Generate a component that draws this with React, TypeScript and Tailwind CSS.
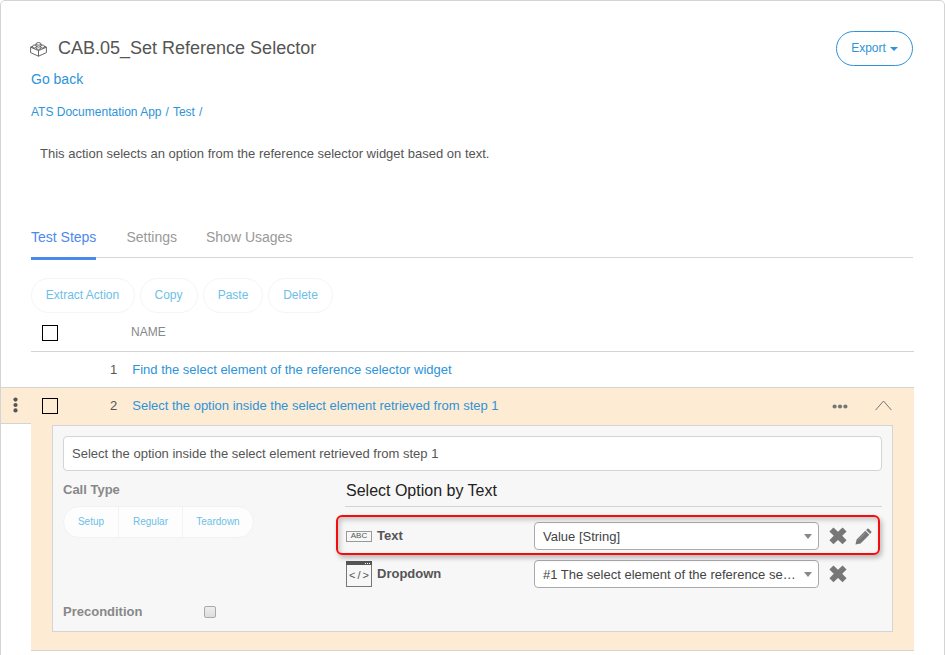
import React from "react";

function Times() {
  return (
    <svg width="18" height="18" viewBox="0 0 17 17" className="shrink-0" fill="#777">
      <path d="M4.2 0.4 8.5 4.5 12.8 0.4 16.6 4.2 12.5 8.3 16.6 12.6 12.8 16.4 8.5 12.3 4.2 16.4 0.4 12.6 4.5 8.3 0.4 4.2Z" />
    </svg>
  );
}

function Pencil() {
  return (
    <svg width="17" height="17" viewBox="0 0 17 17" className="shrink-0" fill="#777">
      <path d="M0.5 16.5 1.6 11.4 10.3 2.7 14.3 6.7 5.6 15.4ZM11.1 1.9 12.4 0.7Q13 0.2 13.6 0.7L16.3 3.4Q16.8 4 16.3 4.6L15.1 5.9Z" />
      <path d="M3.6 11.6 10.6 4.6" stroke="#aaa" strokeWidth="0.7" />
    </svg>
  );
}

function Brick() {
  return (
    <svg width="17" height="15" viewBox="0 0 17 15" fill="none" stroke="#555" strokeWidth="0.9" strokeLinejoin="round">
      <path d="M2.6 4 0.6 5.2 8.5 8.6 16.4 5.2 14.4 4M0.6 5.2V10.6L8.5 14.2 16.4 10.6V5.2M8.5 8.6V14.2" />
      <path d="M6 2V4.4Q8.5 6 11 4.4V2" />
      <ellipse cx="8.5" cy="1.9" rx="2.5" ry="1.3" />
      <path d="M6 3.2Q3.4 2.4 2.6 4V5.4Q4.4 6.8 6.4 5.4M11 3.2Q13.6 2.4 14.4 4V5.4Q12.6 6.8 10.6 5.4M6.4 5.6V6.8Q8.5 8 10.6 6.8V5.6" />
    </svg>
  );
}

function SelectBox({ children }: { children: string }) {
  return (
    <div className="flex h-7 w-[285px] shrink-0 items-center justify-between rounded border border-[#aaa] bg-white pr-[6px] pl-[8px] text-[13px] text-[#444]">
      <span className="mt-px whitespace-nowrap">{children}</span>
      <svg width="8" height="5" viewBox="0 0 8 5"><path d="M0 0H8L4 5Z" fill="#888" /></svg>
    </div>
  );
}

const pill = "flex h-[35px] items-center justify-center whitespace-nowrap rounded-full border border-[#f5f5f5] pb-[2px] text-[12px] text-[#6cbfe8]";

export default function App() {
  return (
    <div className="h-[655px] w-[945px] overflow-hidden bg-white font-['Liberation_Sans',Arial,sans-serif] text-[#555]">
      <div className="flex h-[660px] flex-col rounded-[5px] border border-[#d4d4d4]">
        <header className="mt-[29px] flex h-[36px] items-center pr-[31px] pl-[29px]">
          <span className="mt-[2px]"><Brick /></span>
          <h1 className="ml-[11px] text-[18px]">CAB.05_Set Reference Selector</h1>
          <button className="mt-px ml-auto flex h-[35px] w-[77px] items-center justify-center gap-1 rounded-full border border-[#2e93d9] pb-[2px] text-[12px] text-[#2e93d9]">
            Export
            <svg width="8" height="4" viewBox="0 0 8 4" className="mt-[2px]"><path d="M0 0H8L4 4Z" fill="currentColor" /></svg>
          </button>
        </header>
        <a className="ml-[30px] flex h-[26px] items-center text-[14px] text-[#2e93d9]">Go back</a>
        <nav className="mt-[9px] ml-[30px] flex h-[22px] items-center gap-1 text-[12px] text-[#2e93d9]">
          <a>ATS Documentation App</a><span>/</span><a>Test</a><span>/</span>
        </nav>
        <p className="mt-[21px] ml-[39px] flex h-[20px] items-center text-[13px]">This action selects an option from the reference selector widget based on text.</p>
        <div className="mt-[62px] mr-[31px] ml-[30px] flex h-[32px] gap-[30px] border-b border-[#d6d6d6] text-[14px] text-[#999]">
          <a className="box-content h-[30px] border-b-[3px] border-[#4c89ee] pt-px whitespace-nowrap text-[#4c89ee]">Test Steps</a>
          <a className="pt-px">Settings</a>
          <a className="-ml-px pt-px">Show Usages</a>
        </div>
        <div className="mt-[20px] ml-[30px] flex h-[35px] gap-[5px]">
          <button className={`${pill} w-[104px] pr-px`}>Extract Action</button>
          <button className={`${pill} w-[58px] pr-px`}>Copy</button>
          <button className={`${pill} w-[60px]`}>Paste</button>
          <button className={`${pill} w-[65px]`}>Delete</button>
        </div>
        <div className="mr-[30px] ml-[30px] flex h-[39px] items-center border-b border-[#d4d4d4] pl-[11px] text-[12px] text-[#888]">
          <span className="mt-[2px] size-4 border border-black" />
          <span className="ml-[73px]">NAME</span>
        </div>
        <div className="mr-[30px] ml-[30px] flex h-[36px] items-center border-b border-[#d4d4d4] pl-[79px] text-[13px]">
          <span>1</span>
          <a className="ml-[15px] text-[#2e93d9]">Find the select element of the reference selector widget</a>
        </div>
        <div className="flex h-[263px] pr-[30px]">
          <div className="-mt-px flex h-[37px] w-[30px] items-center justify-center border-y border-[#d4d4d4] bg-[#fdebd3]">
            <svg width="5" height="16" viewBox="0 0 5 16" className="-mt-px -ml-[2px]" fill="#555"><circle cx="2.5" cy="2.6" r="2.1" /><circle cx="2.5" cy="8" r="2.1" /><circle cx="2.5" cy="13.4" r="2.1" /></svg>
          </div>
          <div className="flex w-[883px] flex-col border-b border-[#d4d4d4] bg-[#fdebd3]">
            <div className="flex h-[37px] items-center pr-[22px] pb-[2px] pl-[11px] text-[13px]">
              <span className="size-4 border border-black" />
              <span className="ml-[52px]">2</span>
              <a className="ml-[15px] text-[#2e93d9]">Select the option inside the select element retrieved from step 1</a>
              <svg width="16" height="5" viewBox="0 0 16 5" className="mt-px ml-auto" fill="#777"><circle cx="2.6" cy="2.5" r="2.1" /><circle cx="8" cy="2.5" r="2.1" /><circle cx="13.4" cy="2.5" r="2.1" /></svg>
              <svg width="17" height="11" viewBox="0 0 17 11" className="ml-[27px]" fill="none" stroke="#777"><path d="M0.5 10.2 8.5 1 16.5 10.2" /></svg>
            </div>
            <div className="ml-[21px] flex h-[207px] w-[841px] flex-col border border-[#d4d4d4] bg-[#f7f7f7] px-[10px] pt-[10px]">
              <div className="flex h-[35px] shrink-0 items-center rounded border border-[#d4d4d4] bg-white pl-2 text-[13px]">Select the option inside the select element retrieved from step 1</div>
              <div className="flex">
                <div className="w-[282px] shrink-0 text-[13px] font-bold text-[#888]">
                  <div className="flex h-[35px] items-center pt-[2px]">Call Type</div>
                  <div className="flex h-[32px] w-[191px] overflow-hidden rounded-full border border-[#f2f2f2] bg-[#fdfdfd] text-[10px] font-normal text-[#6cbfe8]">
                    <span className="flex w-[55px] items-center justify-center border-r border-[#f2f2f2] pb-px">Setup</span>
                    <span className="flex w-[64px] items-center justify-center border-r border-[#f2f2f2] pb-px">Regular</span>
                    <span className="flex flex-1 items-center justify-center pb-px">Teardown</span>
                  </div>
                  <div className="mt-[64px] flex h-[20px] items-center">
                    <span className="w-[141px]">Precondition</span>
                    <span className="size-3 rounded-[2px] border border-[#aaa] bg-gradient-to-b from-[#eee] to-[#ddd]" />
                  </div>
                </div>
                <div className="relative w-[537px]">
                  <h2 className="flex h-[36px] items-center border-b border-[#d4d4d4] pt-[5px] pl-px text-[16px] text-[#222]">Select Option by Text</h2>
                  <div className="mt-[15px] flex h-7 items-center">
                    <span className="ml-px flex h-[11px] w-[26px] items-center justify-center border border-[#999] text-[8px] leading-none">ABC</span>
                    <b className="ml-[5px] w-[157px] text-[13px]">Text</b>
                    <SelectBox>Value [String]</SelectBox>
                    <span className="ml-[10px]"><Times /></span>
                    <span className="ml-[8px]"><Pencil /></span>
                  </div>
                  <div className="mt-[10px] flex h-7 items-center">
                    <span className="ml-px flex h-[26px] w-[26px] flex-col border border-[#777] text-[11px] leading-none">
                      <span className="-mx-px -mt-px flex h-[4px] items-center justify-end gap-px bg-[#555] pr-[2px]">
                        <span className="size-px bg-white" /><span className="size-px bg-white" /><span className="size-px bg-white" />
                      </span>
                      <span className="flex flex-1 items-center justify-center gap-[2px]"><i className="not-italic">&lt;</i><i className="not-italic">/</i><i className="not-italic">&gt;</i></span>
                    </span>
                    <b className="ml-[5px] w-[157px] text-[13px]">Dropdown</b>
                    <SelectBox>#1 The select element of the reference se…</SelectBox>
                    <span className="ml-[10px]"><Times /></span>
                  </div>
                  <div className="absolute top-[44px] -left-[9px] h-[40px] w-[544px] rounded-md border-2 border-[#f50d0d] shadow-[2px_3px_5px_rgba(0,0,0,0.25),inset_2px_3px_5px_rgba(0,0,0,0.2)]" />
                </div>
              </div>
            </div>
          </div>
        </div>
      </div>
    </div>
  );
}
